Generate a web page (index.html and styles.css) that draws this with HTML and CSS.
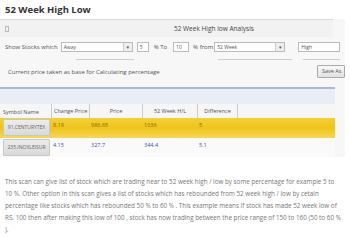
FILE: index.html
```html
<!DOCTYPE html>
<html>
<head>
<meta charset="utf-8">
<link rel="stylesheet" href="styles.css">
</head>
<body>
<h1 class="title">52 Week High Low</h1>
<div class="app">
  <div class="panel-head">
    <span class="win-icon"></span>
    <span class="panel-title">52 Week High low Analysis</span>
  </div>
  <div class="form-row">
    <span class="lbl">Show Stocks which</span>
    <span class="select sel-away">Away<span class="arrow">▾</span></span>
    <span class="input in-5">5</span>
    <span class="lbl">% To</span>
    <span class="input in-10">10</span>
    <span class="lbl">% from</span>
    <span class="select sel-week">52 Week<span class="arrow">▾</span></span>
    <span class="select sel-high">High</span>
  </div>
  <div class="under-row">
    <span class="ghost g1"></span>
    <span class="ghost g2"></span>
    <span class="ghost g3"></span>
  </div>
  <div class="note-row">
    <span class="note">Current price taken as base for Calculating percentage</span>
    <span class="save-btn">Save As</span>
  </div>
  <div class="grid-top"></div>
  <div class="grid">
    <div class="row head">
      <span class="c c1">Symbol Name</span>
      <span class="c c2">Change Price %</span>
      <span class="c c3 center">Price</span>
      <span class="c c4 center">52 Week H/L</span>
      <span class="c c5 center">Difference</span>
    </div>
    <div class="row sel">
      <span class="c c1"><span class="sym">91.CENTURYTEX</span></span>
      <span class="c c2">8.19</span>
      <span class="c c3">986.65</span>
      <span class="c c4">1036</span>
      <span class="c c5">5</span>
    </div>
    <div class="row plain">
      <span class="c c1"><span class="sym">235.INOXLEISUR</span></span>
      <span class="c c2">4.15</span>
      <span class="c c3">327.7</span>
      <span class="c c4">344.4</span>
      <span class="c c5">5.1</span>
    </div>
  </div>
</div>
<p class="desc">This scan can give list of stock which are trading near to 52 week high / low by some percentage for example 5 to 10 %. Other option in this scan gives a list of stocks which has rebounded from 52 week high / low by cetain percentage like stocks which has rebounded 50 % to 60 % . This example means if stock has made 52 week low of RS. 100 then after making this low of 100 , stock has now trading between the price range of 150 to 160 (50 to 60 % ).</p>
</body>
</html>
```
FILE: styles.css
```css
html, body { margin: 0; padding: 0; background: #fff; }
body { width: 350px; height: 237px; overflow: hidden; font-family: "Open Sans", sans-serif; }
.title { margin: 0; padding: 4px 0 0 5px; height: 19px; box-sizing: border-box; font-size: 9.5px; font-weight: 700; color: #333; line-height: 12px; }
.app { width: 345px; background: #f7f7f7; font-family: "Open Sans", "DejaVu Sans", sans-serif; font-size: 5.5px; color: #555; }
.panel-head { height: 17px; border-top: 1px solid #d8d8d8; margin-right: 12px; display: flex; align-items: center; position: relative; background: #f2f2f2; }
.win-icon { width: 2px; height: 4px; border: 1px solid #bbb; margin-left: 5px; }
.panel-title { margin-left: 165px; font-size: 6.5px; color: #444; }
.form-row { display: flex; align-items: center; height: 14px; padding-left: 5px; margin-top: 3px; }
.lbl { white-space: nowrap; font-size: 6px; color: #555; }
.select, .input { height: 10px; box-sizing: border-box; border: 1px solid #bbb; background: #fff; font-size: 5px; line-height: 8px; padding-left: 2px; position: relative; color: #555; }
.arrow { position: absolute; right: 0; top: 0; width: 8px; height: 8px; border-left: 1px solid #ccc; background: #eee; font-size: 5px; text-align: center; color: #555; }
.sel-away { width: 72px; margin-left: 3px; }
.in-5 { width: 12px; margin-left: 4px; margin-right: 5px; }
.in-10 { width: 16px; margin-left: 6px; margin-right: 4px; }
.sel-week { width: 71px; margin-left: 1px; }
.sel-high { width: 42px; margin-left: 13px; }
.under-row { height: 6px; display: flex; align-items: flex-end; }
.ghost { height: 1px; background: #ccc; }
.g1 { width: 58px; margin-left: 76px; }
.g2 { width: 74px; margin-left: 84px; }
.g3 { width: 37px; margin-left: 11px; }
.note-row { display: flex; align-items: center; height: 27px; padding-left: 8px; padding-right: 0; }
.note { flex: 1; font-size: 6px; color: #555; margin-top: -4px; }
.save-btn { width: 28px; height: 13px; box-sizing: border-box; border: 1px solid #aaa; border-radius: 1px; background: linear-gradient(#f8f8f8, #e2e2e2); font-size: 5.5px; line-height: 11px; padding-left: 4px; white-space: nowrap; overflow: hidden; margin-top: -4px; color: #555; }
.grid-top { height: 15px; border-top: 2px solid #a9b8d4; background: #e9eef6; margin-right: 10px; }
.grid { margin-right: 10px; }
.row { display: flex; }
.row.head { height: 14px; background: #f6f6f6; }
.row.head .c { border-right: 1px solid #ccc; line-height: 14px; font-size: 5.5px; color: #555; padding-left: 2px; }
.row.head .c1 { padding-left: 7px; }
.c { box-sizing: border-box; white-space: nowrap; overflow: hidden; }
.center { text-align: center; }
.row.head .center { padding-left: 0; }
.c1 { width: 52px; }
.c2 { width: 38px; }
.c3 { width: 53px; }
.c4 { width: 55px; }
.c5 { width: 40px; }
.row.sel { height: 20px; background: linear-gradient(#f3cf3a, #efc41b 50%, #f5d75a); }
.row.plain { height: 19px; background: #fafafa; }
.row.sel .c, .row.plain .c { font-size: 5.5px; padding-top: 3px; padding-left: 1px; }
.row.sel .c { color: #8a6a00; }
.row.plain .c { color: #3a4fa0; }
.row .c1 { padding: 1px 2px 1px 3px !important; }
.sym { display: block; height: 17px; width: 47px; box-sizing: border-box; background: linear-gradient(#ececec, #d9d9d9); border: 1px solid #c8c8c8; border-radius: 1px; font-size: 5px; line-height: 15px; text-align: center; color: #666; }
.desc { margin: 19px 0 0 5px; width: 338px; font-size: 6.3px; line-height: 12px; color: #777; font-family: "Open Sans", sans-serif; }
```
